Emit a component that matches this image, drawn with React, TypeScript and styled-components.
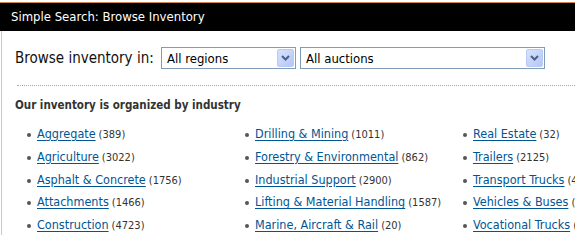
import React from 'react';
import styled, { createGlobalStyle } from 'styled-components';

const GlobalStyle = createGlobalStyle`
    html, body {
        margin: 0;
        padding: 0;
        background: #fff;
        overflow: hidden;
    }
    body {
        font-family: Tahoma, "DejaVu Sans Condensed", "DejaVu Sans", sans-serif;
        color: #333;
    }
`;

const Page = styled.div`
    width: 575px;
    height: 235px;
    padding-top: 2px;
    box-sizing: border-box;
    overflow: hidden;
`;

const Header = styled.div`
    height: 28px;
    background: #000;
    border-top: 1px solid #d0834c;
    color: #fff;
    font-size: 13px;
    line-height: 28px;
    padding-left: 11px;
    white-space: nowrap;
`;

const Panel = styled.div`
    margin-left: 1px;
    border-left: 1px solid #c9c9c9;
    padding: 16px 0 0 13px;
    height: 200px;
`;

const FilterRow = styled.div`
    display: flex;
    align-items: center;
    height: 22px;
`;

const Label = styled.span`
    font-size: 15px;
    color: #111;
    width: 146px;
`;

const Select = styled.div<{ $width: number }>`
    width: ${p => p.$width}px;
    height: 22px;
    box-sizing: border-box;
    border: 1px solid #7f9db9;
    background: #fff;
    display: flex;
    align-items: center;
    justify-content: space-between;
    padding: 0 1px 0 5px;
    margin-right: 4px;
    font-size: 13px;
    color: #000;
`;

const DropButton = styled.span`
    width: 17px;
    height: 18px;
    box-sizing: border-box;
    border: 1px solid #b9cbf3;
    border-radius: 2px;
    background: linear-gradient(135deg, #d6e2fe 0%, #b3c7f7 100%);
    display: flex;
    align-items: center;
    justify-content: center;
`;

const Divider = styled.div`
    border-top: 1px dotted #a9a9a9;
    margin: 16px 0 0 2px;
`;

const Heading = styled.div`
    font-size: 11.5px;
    font-weight: bold;
    color: #333;
    margin-top: 12px;
`;

const Columns = styled.div`
    display: grid;
    grid-template-columns: 218px 218px 218px;
    margin: 14px 0 0 22px;
`;

const List = styled.ul`
    list-style: none;
    margin: 0;
    padding: 0;
`;

const Item = styled.li`
    position: relative;
    height: 22.75px;
    font-size: 12.5px;
    line-height: 16px;
    white-space: nowrap;
    &::before {
        content: '';
        position: absolute;
        left: -10px;
        top: 7px;
        width: 4px;
        height: 4px;
        border-radius: 50%;
        background: #555;
    }
`;

const Link = styled.a`
    color: #005694;
    text-decoration: underline;
    text-underline-offset: 2px;
`;

const Count = styled.span`
    font-size: 11px;
    color: #333;
    margin-left: 3px;
`;

const Chevron = () => (
    <svg width="9" height="6" viewBox="0 0 9 6">
        <path d="M1 1 L4.5 4.5 L8 1" stroke="#4d6185" strokeWidth="2" fill="none" />
    </svg>
);

const columns: [string, number][][] = [
    [
        ['Aggregate', 389],
        ['Agriculture', 3022],
        ['Asphalt & Concrete', 1756],
        ['Attachments', 1466],
        ['Construction', 4723],
    ],
    [
        ['Drilling & Mining', 1011],
        ['Forestry & Environmental', 862],
        ['Industrial Support', 2900],
        ['Lifting & Material Handling', 1587],
        ['Marine, Aircraft & Rail', 20],
    ],
    [
        ['Real Estate', 32],
        ['Trailers', 2125],
        ['Transport Trucks', 4310],
        ['Vehicles & Buses', 4102],
        ['Vocational Trucks', 1893],
    ],
];

export default function App() {
    return (
        <Page>
            <GlobalStyle />
            <Header>Simple Search: Browse Inventory</Header>
            <Panel>
                <FilterRow>
                    <Label>Browse inventory in:</Label>
                    <Select $width={135}>
                        <span>All regions</span>
                        <DropButton><Chevron /></DropButton>
                    </Select>
                    <Select $width={245}>
                        <span>All auctions</span>
                        <DropButton><Chevron /></DropButton>
                    </Select>
                </FilterRow>
                <Divider />
                <Heading>Our inventory is organized by industry</Heading>
                <Columns>
                    {columns.map((col, i) => (
                        <List key={i}>
                            {col.map(([name, count]) => (
                                <Item key={name}>
                                    <Link href="#">{name}</Link>
                                    <Count>({count})</Count>
                                </Item>
                            ))}
                        </List>
                    ))}
                </Columns>
            </Panel>
        </Page>
    );
}
